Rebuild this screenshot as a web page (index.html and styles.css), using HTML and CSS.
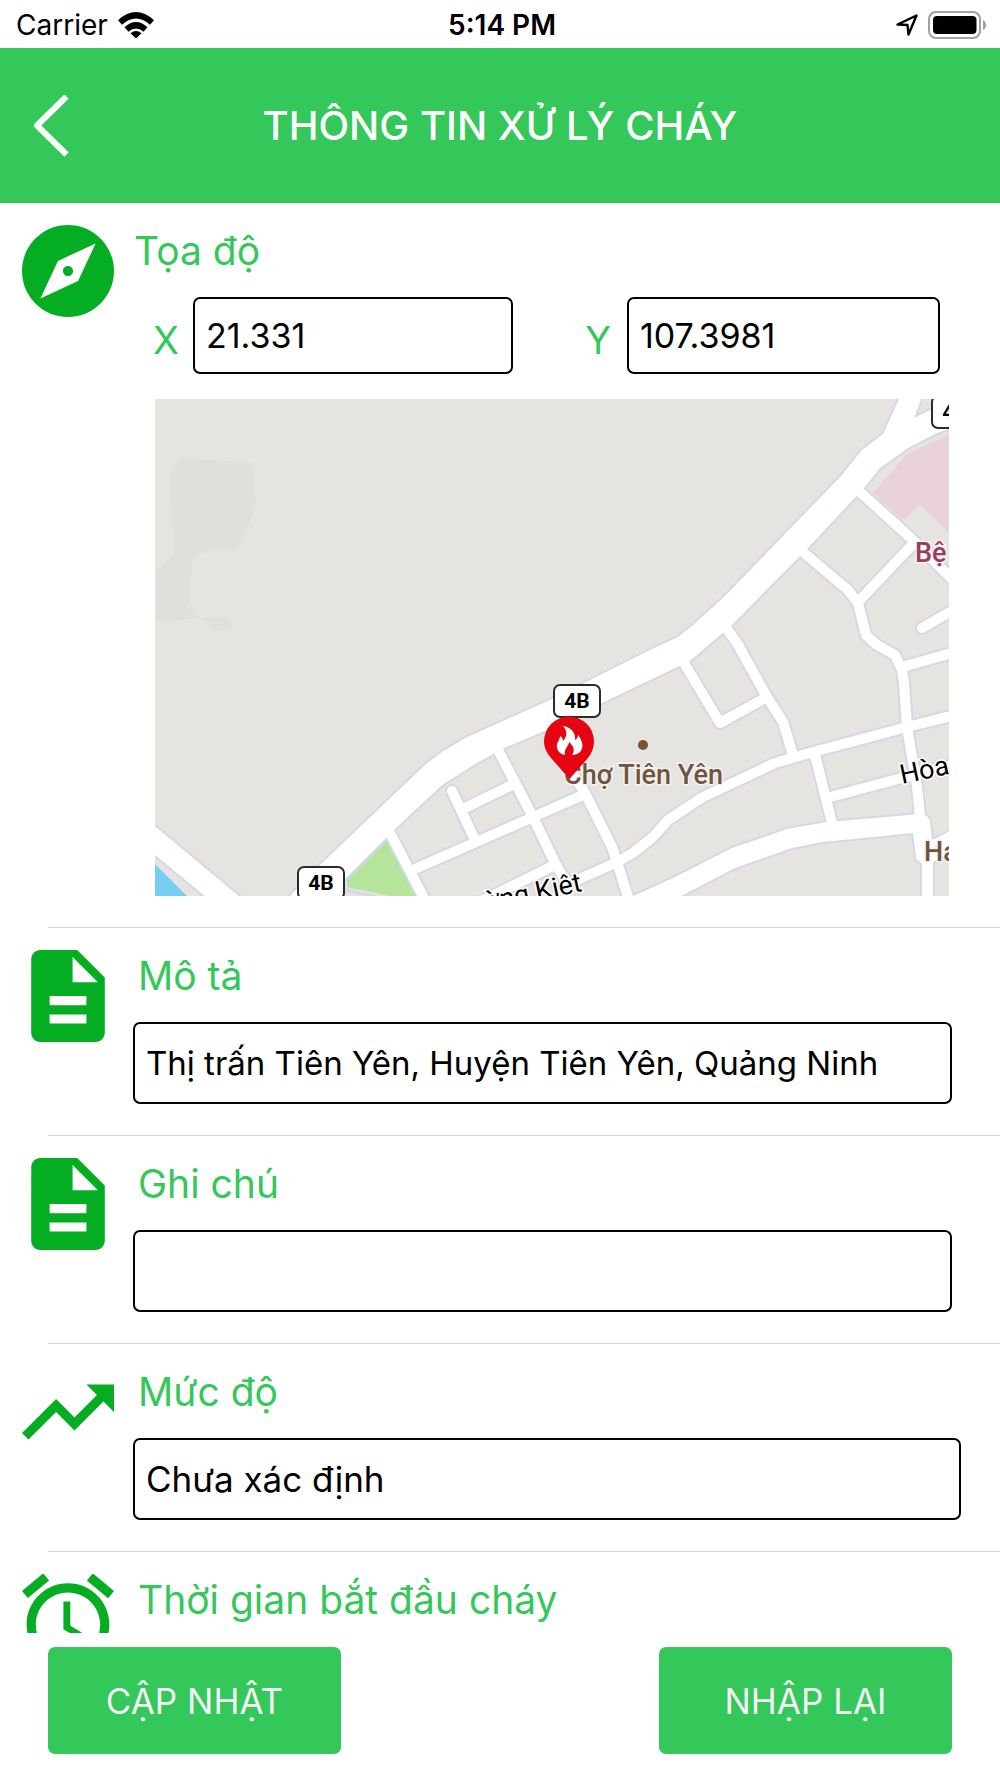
FILE: index.html
```html
<!DOCTYPE html>
<html lang="vi">
<head>
<meta charset="UTF-8">
<meta name="viewport" content="width=device-width, initial-scale=1.0">
<title>Thông tin xử lý cháy</title>
<link rel="stylesheet" href="styles.css">
</head>
<body>

<div class="status-bar">
  <div class="carrier">
    <span>Carrier</span>
    <svg width="36" height="27" viewBox="0 0 36 27" fill="none" stroke="#000" stroke-width="6">
      <path d="M2 10.500Q18 -4 34 10.500"/>
      <path d="M8.500 17.500Q18 9 27.500 17.500"/>
      <path d="M12.500 21.200Q18 17 23.500 21.200L18 26.500z" fill="#000" stroke="none"/>
    </svg>
  </div>
  <div class="time">5:14 PM</div>
  <div class="battery">
    <svg width="22" height="22" viewBox="0 0 22 22" fill="none" stroke="#000" stroke-width="2.400" stroke-linejoin="round">
      <path d="M20.500 1.500L1.500 10.500L11.500 11L12.500 20.500z"/>
    </svg>
    <svg width="60" height="28" viewBox="0 0 60 28">
      <rect x="1" y="1" width="51" height="26" rx="7" fill="none" stroke="#a0a0a0" stroke-width="2"/>
      <rect x="5" y="5" width="43.500" height="18" rx="4" fill="#000"/>
      <path d="M55 9Q58 10.500 58 14T55 19z" fill="#a0a0a0"/>
    </svg>
  </div>
</div>

<header class="header">
  <button type="button" class="back" aria-label="Quay lại">
    <svg width="36" height="62" viewBox="0 0 36 62" fill="none" stroke="#fff" stroke-width="6" stroke-linejoin="round">
      <path d="M33.500 1.500L4 30.500L33.500 59.500"/>
    </svg>
  </button>
  <h1>THÔNG TIN XỬ LÝ CHÁY</h1>
</header>

<form class="form" id="fireForm">
  <section class="item">
    <svg class="icon" viewBox="2 2 20 20">
      <path d="M12 10.900c-.61 0-1.100.49-1.100 1.100s.49 1.100 1.100 1.100c.61 0 1.100-.49 1.100-1.100s-.49-1.100-1.100-1.100zM12 2C6.480 2 2 6.480 2 12s4.480 10 10 10 10-4.480 10-10S17.520 2 12 2zm2.190 12.190L6 18l3.810-8.190L18 6l-3.810 8.190z"/>
    </svg>
    <div class="body">
      <h2 class="label first">Tọa độ</h2>
      <div class="coords">
        <label for="x">X</label>
        <input type="text" id="x" name="x" value="21.331">
        <label for="y">Y</label>
        <input type="text" id="y" name="y" value="107.3981">
      </div>
      <svg class="map" viewBox="155 399 794 497" preserveAspectRatio="xMidYMid slice">
        <rect class="land" x="155" y="399" width="794" height="497"/>
        <!-- areas -->
        <path fill="#e0dfda" d="M179 458L252 463L256 507L237 549H209L193 559L189 600L198 618L155 622V568H160L174 554L170 477z"/>
        <path fill="#e0dfda" d="M203 617H227L232 627L213 632z"/>
        <path fill="#e9d2da" d="M949 435L907 454L873 493L903 520L920 505L949 533z"/>
        <path fill="#78cff2" d="M155 864L187 896H155z"/>
        <path fill="#b5e59c" d="M387 840L347 877V887L400 898H417z"/>

        <!-- roads: casing first, then the white fill -->
        <defs>
          <g id="streets">
            <path d="M861 493L913 540L955 582"/>
            <path d="M803 552L848 590L858 603L866 635L877 645L895 655L902 670L904 683L907 727L917 787L920 817"/>
            <path d="M858 602L913 544"/>
            <path d="M922 628L955 609"/>
            <path d="M727 629L737 643L767 697L783 722L793 755"/>
            <path d="M684 663L720 723L767 697"/>
            <path d="M955 652L902 667"/>
            <path d="M955 715L907 727L813 752L775 763L703 797L668 820L653 837L633 853L615 863L575 881"/>
            <path d="M815 755L832 823"/>
            <path d="M830 797L955 764"/>
            <path d="M567 765L585 793L612 847L617 862L629 900"/>
            <path d="M417 868L533 817L583 795"/>
            <path d="M498 750L533 817L555 863L566 882"/>
            <path d="M510 786L467 807"/>
            <path d="M452 791L475 840"/>
            <path d="M390 833L426 902"/>
            <path d="M480 902L555 865"/>
          </g>
          <g id="highways">
            <path d="M901 395L883 434L862 450L841 476L725 596L693 625L678 637L650 650L552 699L465 738L442 752L427 763L320 865L286 900L325 900L347 877L387 837L395 829L442 785L477 763L502 749L547 730L602 703L690 661L731 626L808 548L864 488L880 468L908 448L935 434L955 427V395z"/>
            <path d="M620 902L673 878L732 848L787 829L827 822L921 814Q929 815 930 822L932 840L955 829V850L933 862V902H922V863Q916 861 916 857L913 833L823 842L792 848L735 868L670 902z"/>
            <path d="M150 822L180 847L246 902H212L150 851z"/>
          </g>
        </defs>
        <path d="M345 890L385 899" fill="none" stroke="#d5d8e6" stroke-width="3"/>
        <use href="#streets" class="street-casing"/>
        <use href="#highways" class="highway-casing"/>
        <use href="#streets" class="street"/>
        <use href="#highways" class="highway"/>
        <path d="M923 397L916 416L932 408V397z" fill="#e5e4e0" stroke="#d5d8e6" stroke-width="2"/>

        <!-- road numbers -->
        <g class="shield">
          <rect x="554" y="685" width="46" height="32" rx="6"/>
          <text x="577" y="708">4B</text>
          <rect x="298" y="867" width="46" height="32" rx="6"/>
          <text x="321" y="890">4B</text>
          <rect x="932" y="396" width="46" height="32" rx="6"/>
          <text x="955" y="419">4B</text>
        </g>

        <!-- names -->
        <circle cx="643" cy="745" r="5" fill="#7a5238"/>
        <text class="place" x="564" y="784">Chợ Tiên Yên</text>
        <text class="place" x="924" y="861">Ha</text>
        <text class="place hospital" x="915" y="562">Bệ</text>
        <text class="road-name" transform="translate(902 784) rotate(-12)">Hòa</text>
        <text class="road-name" text-anchor="end" transform="translate(583 891) rotate(-12)">Thường Kiệt</text>

        <!-- fire marker -->
        <path fill="#e60413" d="M569.500 779L551 758Q544 750 544 741.500A25 25 0 0 1 594 741.500Q594 750 588 758z"/>
        <path fill="#fff" d="M563 726C571 727 576 733 575 740C577 739 578 737 578 735C583 741 584 748 580 752C578 754 575 755 572 755C575 751 574 746 569 742C569 746 564 748 565 755C559 754 556 749 557 744C558 741 560 739 560 736C562 737 563 739 563 741C567 737 568 731 563 726z"/>
      </svg>
    </div>
  </section>

  <section class="item">
    <svg class="icon" viewBox="2 2 20 20">
      <path d="M14 2H6c-1.100 0-1.990.9-1.990 2L4 20c0 1.100.89 2 1.990 2H18c1.100 0 2-.9 2-2V8l-6-6zm2 16H8v-2h8v2zm0-4H8v-2h8v2zm-3-5V3.500L18.500 9H13z"/>
    </svg>
    <div class="body">
      <label class="label" for="description">Mô tả</label>
      <input type="text" id="description" name="description" value="Thị trấn Tiên Yên, Huyện Tiên Yên, Quảng Ninh">
    </div>
  </section>

  <section class="item">
    <svg class="icon" viewBox="2 2 20 20">
      <path d="M14 2H6c-1.100 0-1.990.9-1.990 2L4 20c0 1.100.89 2 1.990 2H18c1.100 0 2-.9 2-2V8l-6-6zm2 16H8v-2h8v2zm0-4H8v-2h8v2zm-3-5V3.500L18.500 9H13z"/>
    </svg>
    <div class="body">
      <label class="label" for="note">Ghi chú</label>
      <input type="text" id="note" name="note">
    </div>
  </section>

  <section class="item">
    <svg class="icon" viewBox="2 2 20 20">
      <path d="M16 6l2.290 2.290-4.880 4.880-4-4L2 16.590 3.410 18l6-6 4 4 6.300-6.290L22 12V6z"/>
    </svg>
    <div class="body wide">
      <label class="label" for="level">Mức độ</label>
      <select id="level" name="level">
        <option>Chưa xác định</option>
      </select>
    </div>
  </section>

  <section class="item">
    <svg class="icon" viewBox="2 2 20 20">
      <path d="M22 5.720l-4.600-3.860-1.290 1.530 4.600 3.860L22 5.720zM7.880 3.390L6.600 1.860 2 5.710l1.290 1.530 4.590-3.850zM12.500 8H11v6l4.750 2.850.75-1.230-4-2.370V8zM12 4c-4.970 0-9 4.030-9 9s4.020 9 9 9c4.970 0 9-4.030 9-9s-4.030-9-9-9zm0 16c-3.870 0-7-3.130-7-7s3.130-7 7-7 7 3.130 7 7-3.130 7-7 7z"/>
    </svg>
    <div class="body">
      <h2 class="label">Thời gian bắt đầu cháy</h2>
    </div>
  </section>
</form>

<footer class="actions">
  <button type="submit" form="fireForm">CẬP NHẬT</button>
  <button type="reset" form="fireForm">NHẬP LẠI</button>
</footer>

</body>
</html>
```
FILE: styles.css
```css
* {
  box-sizing: border-box;
}

body {
  height: 100vh;
  margin: 0;
  display: flex;
  flex-direction: column;
  background-color: #ffffff;
  font-family: Inter, "Liberation Sans", sans-serif;
  color: #000000;
}

/* Status bar */
.status-bar {
  display: grid;
  grid-template-columns: 1fr auto 1fr;
  align-items: center;
  height: 48px;
  padding: 2px 12px 0 16px;
  font-size: 28px;
}

.carrier, .battery {
  display: flex;
  align-items: center;
  gap: 10px;
}

.battery {
  justify-content: flex-end;
}

.time {
  font-weight: 600;
}

/* Header */
.header {
  display: grid;
  grid-template-columns: 1fr auto 1fr;
  align-items: center;
  height: 155px;
  padding: 0 33px;
  background-color: #34c759;
  color: #ffffff;
}

.header h1 {
  margin: 0;
  font-size: 40px;
  font-weight: 500;
}

.back {
  justify-self: start;
  padding: 0;
  border: none;
  background: none;
  cursor: pointer;
}

.back svg {
  display: block;
}

/* Form */
.form {
  flex: 1;
  min-height: 0;
  overflow-y: auto;
  scrollbar-width: none;
}

.item {
  display: flex;
  gap: 19px;
  padding: 22px 0 32px 22px;
  background: linear-gradient(#d4d4d4, #d4d4d4) no-repeat 48px 100% / 100% 1px;
}

.icon {
  flex: none;
  width: 92px;
  height: 92px;
  fill: #04ad21;
}

.body {
  flex: 1;
  padding-right: 48px;
}

.body.wide {
  padding-right: 39px;
}

.label {
  display: block;
  margin: 0 0 20px;
  padding-left: 5px;
  font-size: 39px;
  font-weight: 400;
  line-height: 52px;
  color: #34c759;
}

.label.first {
  padding-left: 1px;
}

input, select {
  display: block;
  width: 100%;
  height: 82px;
  padding: 0 11px;
  border: 2px solid #000000;
  border-radius: 7px;
  background-color: #ffffff;
  font-family: inherit;
  font-size: 33px;
  color: #000000;
}

select {
  appearance: none;
  font-size: 35px;
}

.coords {
  display: grid;
  grid-template-columns: 40px 320fr 114px 313fr;
  align-items: center;
  padding: 0 12px 0 20px;
}

.coords label {
  padding: 8px 16px 0 0;
  font-size: 38px;
  text-align: right;
  color: #34c759;
}

.coords input {
  height: 77px;
  font-size: 34px;
}

/* Map */
.map {
  display: block;
  width: calc(100% - 25px);
  margin: 25px 0 0 22px;
}

.land {
  fill: #e5e4e0;
}

.street, .street-casing {
  fill: none;
  stroke: #ffffff;
  stroke-width: 10px;
  stroke-linecap: round;
  stroke-linejoin: round;
}

.street-casing {
  stroke: #d5d8e6;
  stroke-width: 14px;
}

.highway {
  fill: #ffffff;
}

.highway-casing {
  fill: #d5d8e6;
  stroke: #d5d8e6;
  stroke-width: 4px;
}

.shield rect {
  fill: #ffffff;
  stroke: #2b2b2b;
  stroke-width: 2px;
}

.shield text {
  font-family: Roboto, sans-serif;
  font-size: 21px;
  font-weight: 700;
  text-anchor: middle;
}

.place {
  font-family: Roboto, sans-serif;
  font-size: 27px;
  font-weight: 500;
  fill: #6f5440;
  stroke: #f4f3f0;
  stroke-width: 3px;
  paint-order: stroke;
}

.hospital {
  fill: #963c60;
}

.road-name {
  font-family: Roboto, sans-serif;
  font-size: 27px;
  stroke: #ffffff;
  stroke-width: 3px;
  paint-order: stroke;
}

/* Bottom buttons */
.actions {
  display: flex;
  justify-content: space-between;
  padding: 14px 48px 24px;
}

.actions button {
  width: 293px;
  height: 107px;
  border: none;
  border-radius: 7px;
  background-color: #34c759;
  font-family: inherit;
  font-size: 35px;
  color: #f2f2f7;
  cursor: pointer;
}

.actions button:hover {
  background-color: #2db14f;
}
```
